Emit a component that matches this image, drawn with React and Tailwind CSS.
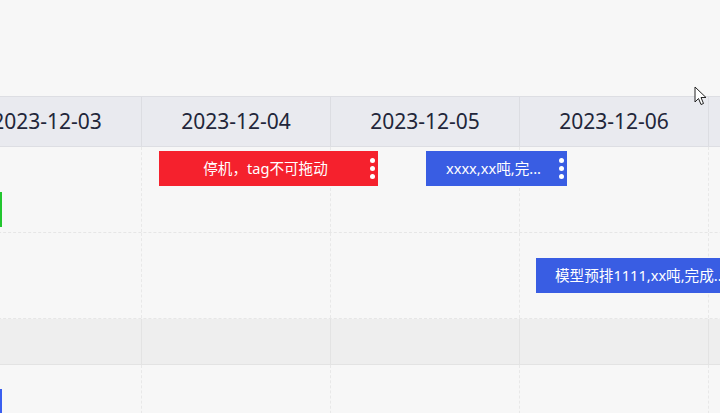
import React from 'react';

const days = ['2023-12-03', '2023-12-04', '2023-12-05', '2023-12-06', '2023-12-07'];

// 事件条：在时间轴画布上的绝对位置
const bars = [
  { id: 1, text: '停机，tag不可拖动', left: 206, top: 4, width: 219, color: 'bg-[#f5212d]', dots: true, row: 0 },
  { id: 2, text: 'xxxx,xx吨,完...', left: 473, top: 4, width: 141, color: 'bg-[#395de3]', dots: true, row: 0 },
  { id: 3, text: '模型预排1111,xx吨,完成...', left: 583, top: 25, width: 300, color: 'bg-[#395de3]', dots: false, row: 1 },
];

function Dots() {
  return (
    <div className="absolute right-[3px] top-0 h-full flex flex-col justify-center gap-[3px]">
      <span className="block w-[5px] h-[5px] rounded-full bg-white" />
      <span className="block w-[5px] h-[5px] rounded-full bg-white" />
      <span className="block w-[5px] h-[5px] rounded-full bg-white" />
    </div>
  );
}

function Bar({ b }) {
  return (
    <div
      className={`absolute h-[35px] ${b.color} text-white text-[14.6px] flex items-center overflow-hidden whitespace-nowrap`}
      style={{ left: b.left, top: b.top, width: b.width }}
    >
      <span className={b.dots ? 'w-full text-center pr-[6px] truncate' : 'pl-[19px]'}>{b.text}</span>
      {b.dots && <Dots />}
    </div>
  );
}

function Row({ height, grey, index, children }) {
  return (
    <div
      className={`relative flex border-b ${grey ? 'bg-[#eeeeee] border-[#e3e3e3]' : 'border-dashed border-[#e6e6e6]'}`}
      style={{ height }}
    >
      {days.map((d, i) => (
        <div key={d} className={`w-[189px] shrink-0 border-r ${grey ? 'border-[#e3e3e3]' : 'border-dashed border-[#e8e8e8]'}`} />
      ))}
      {bars.filter(b => b.row === index).map(b => <Bar key={b.id} b={b} />)}
      {children}
    </div>
  );
}

export default function App() {
  return (
    <div
      className="w-[720px] h-[413px] overflow-hidden bg-[#f7f7f7] relative"
      style={{ fontFamily: '"Noto Sans", "Noto Sans CJK SC", sans-serif' }}
    >
      <div className="h-[96px]" />
      <div className="ml-[-47px] w-[945px]">
        {/* 日期表头 */}
        <div className="flex h-[51px] bg-[#e9eaef] border-t border-b border-[#dddee3]">
          {days.map(d => (
            <div key={d} className="w-[189px] shrink-0 border-r border-[#dcdde2] flex items-center justify-center text-[21px] text-[#22263a]">
              {d}
            </div>
          ))}
        </div>
        <Row height={86} index={0}>
          <div className="absolute left-[47px] top-[45px] w-[2px] h-[35px] bg-[#22c62f]" />
        </Row>
        <Row height={86} index={1} />
        <Row height={46} index={2} grey />
        <Row height={60} index={3}>
          <div className="absolute left-[47px] top-[24px] w-[2px] h-[35px] bg-[#3a5ff0]" />
        </Row>
      </div>
      {/* 鼠标指针 */}
      <svg className="absolute left-[694px] top-[86px]" width="13" height="20" viewBox="0 0 13 20">
        <path d="M1 1 L1 16 L4.5 12.5 L7 18.5 L9.5 17.5 L7 11.5 L12 11.5 Z" fill="white" stroke="#222" strokeWidth="1" strokeLinejoin="round" />
      </svg>
    </div>
  );
}
